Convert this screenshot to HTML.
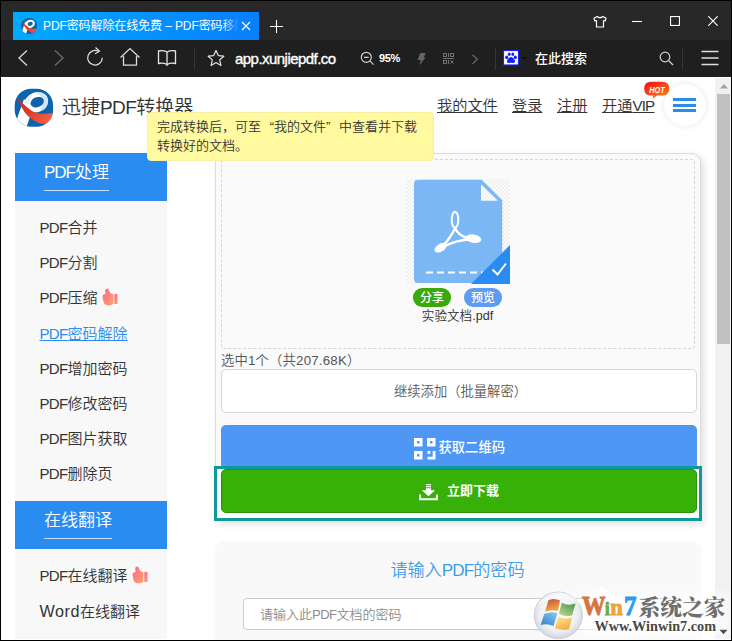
<!DOCTYPE html>
<html lang="zh-CN">
<head>
<meta charset="utf-8">
<title>PDF密码解除在线免费 – PDF密码移除</title>
<style>
*{box-sizing:border-box;margin:0;padding:0}
html,body{width:732px;height:641px;overflow:hidden;background:#fff}
body{position:relative;font-family:"Liberation Sans","Noto Sans CJK SC",sans-serif;color:#333;-webkit-font-smoothing:antialiased}
.abs{position:absolute}
#win{position:absolute;left:0;top:0;width:732px;height:641px;overflow:hidden;background:#fff}
/* chrome */
#titlebar{position:absolute;left:0;top:0;width:732px;height:40px;background:#282828}
#tab{position:absolute;left:13px;top:12px;width:246px;height:28px;background:linear-gradient(90deg,#00aaff,#0a7efc);overflow:hidden}
#tabtitle{position:absolute;left:30px;top:1px;height:27px;line-height:27px;font-size:12px;color:#fff;white-space:nowrap;width:196px;overflow:hidden;letter-spacing:-0.1px}
#tabfade{position:absolute;left:210px;top:0;width:16px;height:28px;background:linear-gradient(90deg,rgba(11,129,252,0),#0b81fc)}
#toolbar{position:absolute;left:0;top:40px;width:732px;height:37px;background:#1f1f1f}
#url{position:absolute;left:235px;top:0;height:37px;line-height:38px;font-size:15px;letter-spacing:-0.54px;color:#fff;-webkit-text-stroke:0.35px #fff;white-space:nowrap}
#zoomtxt{position:absolute;left:379px;top:0;height:37px;line-height:37px;font-size:11px;letter-spacing:-0.4px;color:#fff;font-weight:bold}
#searchtxt{position:absolute;left:535px;top:0;height:37px;line-height:37px;font-size:13px;color:#fff;font-weight:500;white-space:nowrap}
/* page */
#page{position:absolute;left:1px;top:77px;width:714px;height:563px;background:#fff;overflow:hidden;font-weight:350}
#logotitle{position:absolute;left:61px;top:16.5px;font-size:19px;line-height:28px;color:#333;white-space:nowrap}
.nav{position:absolute;top:17px;font-size:15.2px;line-height:24px;color:#333;text-decoration:underline;white-space:nowrap}
#side{position:absolute;left:14px;top:76px;width:152px;height:486px;background:#f8f8f8}
.sh{position:absolute;left:0;width:152px;height:48px;background:#2a8cf0;color:#fff;font-size:17px}
.sh>span{position:absolute;left:29px;top:7px;line-height:26px;height:31px;white-space:nowrap;border-bottom:1px solid rgba(255,255,255,.75)}
.si{position:absolute;left:24.5px;font-size:15px;line-height:24px;color:#333;white-space:nowrap}
.si.act{color:#2a8cf0;text-decoration:underline}
#card{position:absolute;left:214px;top:76px;width:486px;height:368px;background:#fafafa;border:1px solid #dcdcdc;border-radius:9px 9px 2px 2px;box-shadow:3px 3px 7px rgba(0,0,0,.12)}
#drop{position:absolute;left:220px;top:82px;width:474px;height:190px;border:1px dashed #d4d4d4;border-radius:4px;background:#fafafa}
#tip{position:absolute;left:146px;top:35px;width:287px;height:49px;background:#fffa9f;border:1px solid #fbf0a0;border-radius:4px;font-size:13px;line-height:18.5px;color:#333;padding:5px 0 0 9px;white-space:nowrap}
.q{display:inline-block;width:13px}.ql{text-align:right}.qr{text-align:left}
.l{letter-spacing:-0.65px}
.pill{position:absolute;top:211px;width:38px;height:18.5px;border-radius:9.25px;color:#fff;font-size:12px;line-height:21px;text-align:center;font-weight:500}
#fname{position:absolute;left:356.5px;top:230px;width:200px;text-align:center;font-size:12.6px;line-height:18px;color:#333}
#sel{position:absolute;left:220px;top:274px;letter-spacing:0.2px;font-size:13.3px;line-height:20px;color:#555;white-space:nowrap}
#btnadd{position:absolute;left:220px;top:292px;width:476px;height:44px;background:#fff;border:1px solid #d6d6d6;border-radius:5px;text-align:center;font-size:13.3px;line-height:43px;color:#5a5a5a;padding-left:3px}
#btnqr{position:absolute;left:220px;top:348px;width:476px;height:46px;background:#4f97f5;border-radius:5px 5px 0 0;color:#fff;font-size:13.3px}
#teal{position:absolute;left:213px;top:389px;width:488px;height:55px;border:3px solid #0e9a9a;background:#fff}
#btndl{position:absolute;left:220px;top:392px;width:476px;height:44px;background:#37b007;border:1px solid #2c8f06;border-radius:5px;color:#fff;font-size:13.3px}
#card2{position:absolute;left:214px;top:465px;width:486px;height:200px;background:#f9f9f9;border-radius:9px;box-shadow:0 0 3px rgba(0,0,0,.04)}
#c2title{position:absolute;left:213px;top:481px;width:487px;text-align:center;font-size:17.1px;line-height:26px;color:#3d9de8}
#pwd{position:absolute;left:242px;top:521px;width:430px;height:32px;background:#fff;border:1px solid #ccc;border-radius:4px;font-size:13px;line-height:31px;color:#8c8c8c;padding-left:16px;white-space:nowrap}
/* scrollbar */
#sb{position:absolute;left:715px;top:78px;width:16px;height:561px;background:#f1f1f1}
#sbthumb{position:absolute;left:2px;top:16px;width:13px;height:250px;background:#c1c1c1}
#bord-l{position:absolute;left:0;top:0;width:1px;height:641px;background:#000}
#bord-r{position:absolute;left:731px;top:0;width:1px;height:641px;background:#000}
#bord-b{position:absolute;left:0;top:640px;width:732px;height:1px;background:#000}
#bord-t{position:absolute;left:0;top:0;width:732px;height:1px;background:#000}
</style>
</head>
<body>
<div id="win">

<div id="titlebar">
  <div id="tab">
    <svg class="abs" style="left:8px;top:6px" width="16" height="16" viewBox="6.7 6.7 38.4 38">
      <defs><clipPath id="lclip2"><rect x="6.700" y="6.700" width="38.400" height="38" rx="18" ry="18"/></clipPath>
      <linearGradient id="lgr2" x1="0" y1="0" x2="1" y2="0.6"><stop offset="0" stop-color="#d42a14"/><stop offset="1" stop-color="#f4502f"/></linearGradient></defs>
      <rect x="6.700" y="6.700" width="38.400" height="38" rx="18" ry="18" fill="#0b64ad"/>
      <g clip-path="url(#lclip2)">
        <path d="M17 15 L9 38 L19 45 L24.500 26Z" fill="#fff"/>
        <ellipse cx="28.300" cy="20.500" rx="11.800" ry="9.700" transform="rotate(-18 28.3 20.5)" fill="#fff"/>
        <ellipse cx="28.800" cy="20.400" rx="6.400" ry="4.700" transform="rotate(-18 28.8 20.4)" fill="#0b64ad"/>
        <path d="M8.500 14.500 Q18 26 27 30.500 Q35 34 45.500 30.800 L45 38 Q40 42.500 32 41.800 Q22 37 17 30 Q11 21 8.500 14.500Z" fill="url(#lgr2)"/>
      </g>
    </svg>
    <div id="tabtitle">PDF密码解除在线免费 – PDF密码移除</div>
    <div id="tabfade"></div>
    <svg class="abs" style="left:228px;top:9px" width="10" height="10" viewBox="0 0 10 10"><path d="M1 1 L9 9 M9 1 L1 9" stroke="#fff" stroke-width="1.2" fill="none"/></svg>
  </div>
  <svg class="abs" style="left:270px;top:20px" width="13" height="13" viewBox="0 0 13 13"><path d="M6.5 0 V13 M0 6.5 H13" stroke="#fff" stroke-width="1.1" fill="none"/></svg>
  <!-- window controls -->
  <svg class="abs" style="left:592px;top:13.5px" width="16" height="16" viewBox="0 0 16 16"><path d="M5.2 2.5 L2 4.2 L2.8 7 L4.5 6.5 V13 H11.5 V6.5 L13.2 7 L14 4.2 L10.8 2.5 Q8 5 5.2 2.5Z" stroke="#fff" stroke-width="1.2" fill="none" stroke-linejoin="round"/></svg>
  <svg class="abs" style="left:632px;top:14px" width="10" height="14" viewBox="0 0 10 14"><path d="M0 7.500 H10" stroke="#fff" stroke-width="1.1"/></svg>
  <svg class="abs" style="left:670px;top:16px" width="10" height="10" viewBox="0 0 10 10"><rect x="0.55" y="0.55" width="8.9" height="8.9" stroke="#fff" stroke-width="1.1" fill="none"/></svg>
  <svg class="abs" style="left:708px;top:16px" width="10" height="10" viewBox="0 0 10 10"><path d="M0.300 0.300 L9.700 9.700 M9.700 0.300 L0.300 9.700" stroke="#fff" stroke-width="1.15" fill="none"/></svg>
</div>

<div id="toolbar">
  <!-- back -->
  <svg class="abs" style="left:16px;top:9px" width="14" height="18" viewBox="0 0 14 18"><path d="M11 1.5 L3 9 L11 16.5" stroke="#dedede" stroke-width="1.25" fill="none"/></svg>
  <!-- forward -->
  <svg class="abs" style="left:52px;top:9px" width="14" height="18" viewBox="0 0 14 18"><path d="M3 1.5 L11 9 L3 16.5" stroke="#6a6a6a" stroke-width="1.4" fill="none"/></svg>
  <!-- reload -->
  <svg class="abs" style="left:85px;top:6px" width="20" height="22" viewBox="0 0 20 22"><path d="M13.2 5.2 A7.3 7.3 0 1 0 17.3 11.8" stroke="#dedede" stroke-width="1.25" fill="none"/><path d="M10.5 1.5 L14.5 5.2 L10 7.8" stroke="#dedede" stroke-width="1.25" fill="none"/></svg>
  <!-- home -->
  <svg class="abs" style="left:119px;top:7px" width="22" height="20" viewBox="0 0 22 20"><path d="M1.5 10.5 L11 1.5 L20.5 10.5 M4.5 9 V18 H17.5 V9" stroke="#dedede" stroke-width="1.25" fill="none"/></svg>
  <!-- book -->
  <svg class="abs" style="left:156.5px;top:8.5px" width="20" height="18" viewBox="0 0 20 18"><path d="M10 3 Q6 1 1.5 2 V14.5 Q6 13.5 10 15.5 Q14 13.5 18.5 14.5 V2 Q14 1 10 3 V17" stroke="#e6e6e6" stroke-width="1.3" fill="none"/></svg>
  <div class="abs" style="left:194px;top:8px;width:1px;height:22px;background:#353535"></div>
  <!-- star -->
  <svg class="abs" style="left:207px;top:8.5px" width="18" height="18" viewBox="0 0 18 18"><path d="M9 1.5 L11.3 6.6 L16.8 7.2 L12.7 10.9 L13.9 16.4 L9 13.6 L4.1 16.4 L5.3 10.9 L1.2 7.2 L6.7 6.6Z" stroke="#e6e6e6" stroke-width="1.2" fill="none" stroke-linejoin="round"/></svg>
  <div id="url">app.xunjiepdf.co</div>
  <!-- zoom out magnifier -->
  <svg class="abs" style="left:359.500px;top:11px" width="16" height="16" viewBox="0 0 16 16"><circle cx="6.300" cy="6.300" r="5" stroke="#d4d4d4" stroke-width="1.150" fill="none"/><path d="M4 6.300 H8.600 M9.900 9.900 L13.600 13.600" stroke="#d4d4d4" stroke-width="1.150"/></svg>
  <div id="zoomtxt">95%</div>
  <!-- bolt -->
  <svg class="abs" style="left:417px;top:12px" width="10" height="14" viewBox="0 0 10 14"><path d="M3.400 1 H8.800 L6.600 5.600 H8.600 L2.400 13.300 L3.800 7.900 H0.600Z" fill="#666"/></svg>
  <!-- qr -->
  <svg class="abs" style="left:443px;top:13px" width="11" height="11" viewBox="0 0 11 11"><g stroke="#707070" stroke-width="1" fill="none"><rect x="0.500" y="0.500" width="3" height="3"/><rect x="7.500" y="0.500" width="3" height="3"/><rect x="0.500" y="7.500" width="3" height="3"/><path d="M5.500 0 V4 M0 5.500 H11 M5.500 7 V11 M7.500 7.500 L10.500 10.500 M10.500 7.500 L7.500 10.500"/></g></svg>
  <svg class="abs" style="left:471px;top:13.500px" width="8" height="11" viewBox="0 0 8 11"><path d="M1.500 0.700 L6.300 5.300 L1.500 9.900" stroke="#6a6a6a" stroke-width="1.200" fill="none"/></svg>
  <div class="abs" style="left:495px;top:8px;width:1px;height:22px;background:#353535"></div>
  <!-- baidu -->
  <svg class="abs" style="left:503px;top:10px" width="16" height="16" viewBox="0 0 16 16"><rect width="16" height="15.500" fill="#1b25f0"/><rect x="1.100" y="1.100" width="13.800" height="13.300" fill="#fff"/><g fill="#1420ff"><ellipse cx="3.700" cy="7.300" rx="1.500" ry="1.900"/><ellipse cx="6.200" cy="4.300" rx="1.400" ry="1.800"/><ellipse cx="9.800" cy="4.300" rx="1.400" ry="1.800"/><ellipse cx="12.300" cy="7.300" rx="1.500" ry="1.900"/><path d="M8 7 Q10 7 11.700 10 Q12.700 12.900 10.200 13 Q8 12.500 5.800 13 Q3.300 12.900 4.300 10 Q6 7 8 7Z"/></g></svg>
  <svg class="abs" style="left:522px;top:17px" width="5" height="3" viewBox="0 0 5 3"><path d="M0 0 H5 L2.500 3Z" fill="#0a0a0a"/></svg>
  <div id="searchtxt">在此搜索</div>
  <svg class="abs" style="left:659px;top:11px" width="15" height="15" viewBox="0 0 15 15"><circle cx="6" cy="6" r="4.8" stroke="#d0d0d0" stroke-width="1.2" fill="none"/><path d="M9.5 9.5 L14 14" stroke="#d0d0d0" stroke-width="1.2"/></svg>
  <div class="abs" style="left:682px;top:8px;width:1px;height:22px;background:#353535"></div>
  <svg class="abs" style="left:701px;top:10px" width="18" height="16" viewBox="0 0 18 16"><path d="M0.5 1.5 H17.5 M0.5 8 H17.5 M0.5 14.5 H17.5" stroke="#e0e0e0" stroke-width="1.3"/></svg>
</div>

<div id="page">
  <!-- logo -->
  <svg class="abs" style="left:7px;top:5px" width="54" height="54" viewBox="0 0 54 54">
    <defs>
      <linearGradient id="lgr" x1="0" y1="0" x2="1" y2="0.6"><stop offset="0" stop-color="#c4281a"/><stop offset="0.5" stop-color="#de3c25"/><stop offset="1" stop-color="#f4603f"/></linearGradient>
      <clipPath id="lclip"><rect x="6.700" y="6.700" width="38.400" height="38" rx="16.500" ry="16.500"/></clipPath>
    </defs>
    <rect x="6.700" y="6.700" width="38.400" height="38" rx="16.500" ry="16.500" fill="#0b64ad"/>
    <g clip-path="url(#lclip)">
      <path d="M16 17 L8.500 38 L18.500 45 L25 26Z" fill="#fff"/>
      <ellipse cx="28.300" cy="20.300" rx="12" ry="9.900" transform="rotate(-20 28.3 20.3)" fill="#fff"/>
      <path d="M26 10.600 Q38.500 8.500 40.200 18.500 Q40 27.500 30.500 30.200 Q35.500 24 34.800 18 Q33 12 26 10.600Z" fill="#d2e8f9"/>
      <path d="M16.500 21 Q19 13.500 26 11.500 Q21.500 15.500 21 22.500Z" fill="#e4f1fb"/>
      <ellipse cx="29.200" cy="20.200" rx="6.900" ry="5" transform="rotate(-22 29.2 20.2)" fill="#0b64ad"/>
      <path d="M8.500 14.500 Q16 23.500 24 29 Q32 33.500 45.500 30.800 L45 38 Q40 42.500 32 41.500 Q22 37.500 16.500 30 Q11 21 8.500 14.500Z" fill="url(#lgr)"/>
    </g>
  </svg>
  <div id="logotitle">迅捷<span style="letter-spacing:-0.6px">PDF</span>转换器</div>
  <div class="nav" style="left:436px">我的文件</div>
  <div class="nav" style="left:511px">登录</div>
  <div class="nav" style="left:556px">注册</div>
  <div class="nav" style="left:601px">开通<span style="letter-spacing:-0.8px">VIP</span></div>
  <!-- HOT -->
  <svg class="abs" style="left:642px;top:4px" width="28" height="19" viewBox="0 0 28 19">
    <defs><linearGradient id="hg" x1="0.1" y1="0" x2="0.9" y2="1"><stop offset="0" stop-color="#f60f1c"/><stop offset="0.5" stop-color="#fa4a1a"/><stop offset="1" stop-color="#ff9412"/></linearGradient></defs>
    <path d="M8 0.800 H19.500 Q26.200 0.800 26.200 7.700 Q26.200 14.600 19.500 14.600 H14 L9.800 17.800 L10.300 14.600 H8 Q1.200 14.600 1.200 7.700 Q1.200 0.800 8 0.800Z" fill="url(#hg)"/>
    <text x="6.200" y="11.600" font-family="Liberation Sans, sans-serif" font-size="9.800" font-weight="bold" font-style="italic" fill="#fff" textLength="15.500" lengthAdjust="spacingAndGlyphs">HOT</text>
  </svg>
  <!-- hamburger circle -->
  <div class="abs" style="left:663px;top:7px;width:42px;height:42px;border-radius:50%;background:#fff;box-shadow:0 0 6px rgba(0,0,0,.10)"></div>
  <div class="abs" style="left:672px;top:21px;width:23px;height:3px;background:#2a8cf0"></div>
  <div class="abs" style="left:672px;top:26.5px;width:23px;height:3px;background:#2a8cf0"></div>
  <div class="abs" style="left:672px;top:32px;width:23px;height:3px;background:#2a8cf0"></div>

  <!-- sidebar -->
  <div id="side">
    <div class="sh" style="top:0"><span><span style="letter-spacing:-1px">PDF</span>处理</span></div>
    <div class="si" style="top:63px"><span class="l">PDF</span>合并</div>
    <div class="si" style="top:98px"><span class="l">PDF</span>分割</div>
    <div class="si" style="top:133px"><span class="l">PDF</span>压缩</div>
    <svg class="abs" style="left:86.5px;top:134.5px" width="16" height="18" viewBox="0 0 16 18"><defs><linearGradient id="tg1" x1="0" y1="0" x2="1" y2="1"><stop offset="0" stop-color="#ff6397"/><stop offset="1" stop-color="#ffa562"/></linearGradient></defs><path d="M4.500 0.700 Q6.300 0 6.800 2 Q7.200 4.500 9 5.500 L11.300 6.300 V16 Q8 18 4.500 17 Q2 16.500 1.300 13 L0.500 8.500 Q0.300 6.500 2.500 6.300 L3.600 6 Q3 3 3.200 2 Q3.400 0.900 4.500 0.700Z" fill="url(#tg1)"/><rect x="12.300" y="6" width="3.300" height="10" rx="0.800" fill="url(#tg1)"/></svg>
    <div class="si act" style="top:169px"><span class="l">PDF</span>密码解除</div>
    <div class="si" style="top:204px"><span class="l">PDF</span>增加密码</div>
    <div class="si" style="top:239px"><span class="l">PDF</span>修改密码</div>
    <div class="si" style="top:274px"><span class="l">PDF</span>图片获取</div>
    <div class="si" style="top:309px"><span class="l">PDF</span>删除页</div>
    <div class="sh" style="top:348px"><span>在线翻译</span></div>
    <div class="si" style="top:411px"><span class="l">PDF</span>在线翻译</div>
    <svg class="abs" style="left:116.7px;top:412.7px" width="16" height="18" viewBox="0 0 16 18"><defs><linearGradient id="tg2" x1="0" y1="0" x2="1" y2="1"><stop offset="0" stop-color="#ff6397"/><stop offset="1" stop-color="#ffa562"/></linearGradient></defs><path d="M4.500 0.700 Q6.300 0 6.800 2 Q7.200 4.500 9 5.500 L11.300 6.300 V16 Q8 18 4.500 17 Q2 16.500 1.300 13 L0.500 8.500 Q0.300 6.500 2.500 6.300 L3.600 6 Q3 3 3.200 2 Q3.400 0.900 4.500 0.700Z" fill="url(#tg2)"/><rect x="12.300" y="6" width="3.300" height="10" rx="0.800" fill="url(#tg2)"/></svg>
    <div class="si" style="top:446px"><span style="font-size:16.2px;letter-spacing:0.5px">Word</span>在线翻译</div>
  </div>

  <!-- main card -->
  <div id="card"></div>
  <div id="drop"></div>
  <!-- file icon -->
  <svg class="abs" style="left:405px;top:102px" width="104" height="105" viewBox="0 0 104 105">
    <defs>
      <pattern id="chk" width="4" height="4" patternUnits="userSpaceOnUse"><rect width="4" height="4" fill="#fafafa"/><rect width="2" height="2" fill="#f1f1f1"/><rect x="2" y="2" width="2" height="2" fill="#f1f1f1"/></pattern>
    </defs>
    <rect x="0" y="0" width="104" height="105" fill="url(#chk)"/>
    <path d="M12 0.700 H75.700 L96.200 21.200 V100 Q96.200 104 92.200 104 H12 Q8 104 8 100 V4.700 Q8 0.700 12 0.700Z" fill="#73b3f5" fill-opacity="0.93"/>
    <path d="M75 5.300 V21.800 H92Z" fill="url(#chk)"/>
    <path d="M20 93.500 H78" stroke="#fff" stroke-width="2" stroke-dasharray="7 4" fill="none"/>
    <g fill="none" stroke="#fff" stroke-linecap="round" stroke-linejoin="round">
      <ellipse cx="49" cy="40.700" rx="3.300" ry="8" stroke-width="2"/>
      <path d="M48.800 49.500 Q45 58 37 67" stroke-width="2.400"/>
      <path d="M49.300 49.500 Q52 56 62 59.500" stroke-width="2.400"/>
      <path d="M63 60.300 Q50 61.500 38 67.500" stroke-width="2.400"/>
    </g>
    <ellipse cx="34.600" cy="68.700" rx="6.800" ry="3.900" transform="rotate(-32 34.600 68.700)" fill="#fff"/>
    <ellipse cx="67.400" cy="59.700" rx="8" ry="4.200" transform="rotate(9 67.400 59.700)" fill="#fff"/>
    <path d="M104 66 V105 H65Z" fill="#2a8cf0"/>
    <path d="M86.500 90.500 L91.500 95.500 L100 84.500" stroke="#fff" stroke-width="2" fill="none"/>
  </svg>
  <div class="pill" style="left:412px;background:#3aa90a">分享</div>
  <div class="pill" style="left:463px;background:#5b9df5">预览</div>
  <div id="fname">实验文档.pdf</div>

  <div id="sel">选中1个（共207.68K）</div>
  <div id="btnadd">继续添加（批量解密）</div>
  <div id="btnqr">
    <svg class="abs" style="left:193px;top:12.500px" width="22" height="22" viewBox="0 0 22 22"><g fill="#fff">
      <path d="M0 0 H8.500 V8.500 H0Z M3 3 V5.500 H5.500 V3Z" fill-rule="evenodd"/>
      <path d="M13 0 H21.500 V8.500 H13Z M16 3 V5.500 H18.500 V3Z" fill-rule="evenodd"/>
      <path d="M0 13 H8.500 V21.500 H0Z M3 16 V18.500 H5.500 V16Z" fill-rule="evenodd"/>
      <rect x="13.500" y="13" width="2.800" height="2.800"/>
      <path d="M18.700 13 H21.500 V21.500 H13.500 V18.700 H18.700Z"/>
    </g></svg>
    <span class="abs" style="left:217.5px;top:1px;line-height:43px;white-space:nowrap;font-weight:500">获取二维码</span>
  </div>
  <div id="teal"></div>
  <div id="btndl">
    <svg class="abs" style="left:197px;top:14px" width="19" height="16.600" viewBox="0 0 20 17.500" preserveAspectRatio="none"><g fill="#fff">
      <rect x="7.300" y="0" width="5.400" height="1.300"/><rect x="7.300" y="2.200" width="5.400" height="1.300"/>
      <path d="M7.300 4.400 H12.700 V6.500 H17 L10 13 L3 6.500 H7.300Z"/>
      <path d="M0 11 H2.200 V15 H17.800 V11 H20 V17.200 H0Z"/>
    </g></svg>
    <span class="abs" style="left:225px;top:0;line-height:42px;white-space:nowrap;font-weight:bold;font-size:13px">立即下载</span>
  </div>
  <div id="card2"></div>
  <div id="c2title">请输入<span style="letter-spacing:-0.9px">PDF</span>的密码</div>
  <div id="pwd">请输入此<span style="letter-spacing:-0.5px">PDF</span>文档的密码</div>

  <div id="tip">完成转换后，可至<span class="q ql">“</span>我的文件<span class="q qr">”</span>中查看并下载<br>转换好的文档。</div>
</div>

<div id="sb">
  <svg class="abs" style="left:4.500px;top:5.500px" width="8" height="5" viewBox="0 0 8 5"><path d="M0 4.500 L4 0 L8 4.500Z" fill="#a3a3a3"/></svg>
  <div id="sbthumb"></div>
  
</div>


<!-- watermark -->
<svg class="abs" style="left:526px;top:576px" width="206" height="65" viewBox="526 576 206 65">
  <defs>
    <radialGradient id="orb" cx="0.5" cy="0.45" r="0.55"><stop offset="0" stop-color="#ffffff" stop-opacity="0.92"/><stop offset="0.7" stop-color="#eceff3" stop-opacity="0.9"/><stop offset="1" stop-color="#cdd3dc" stop-opacity="0.93"/></radialGradient>
    <linearGradient id="fr" x1="0.3" y1="0" x2="0.6" y2="1"><stop offset="0" stop-color="#c9553a"/><stop offset="1" stop-color="#f7b247"/></linearGradient>
    <linearGradient id="fg" x1="0.9" y1="0" x2="0.2" y2="1"><stop offset="0" stop-color="#4a9446"/><stop offset="1" stop-color="#b4d88a"/></linearGradient>
    <linearGradient id="fb" x1="0.9" y1="0" x2="0.1" y2="1"><stop offset="0" stop-color="#86c8f0"/><stop offset="1" stop-color="#3480cf"/></linearGradient>
    <linearGradient id="fy" x1="0.2" y1="0" x2="0.7" y2="1"><stop offset="0" stop-color="#fde592"/><stop offset="1" stop-color="#f5a93c"/></linearGradient>
    <filter id="wblur" x="-20%" y="-20%" width="140%" height="140%"><feGaussianBlur stdDeviation="3"/></filter>
  </defs>
  <rect x="580" y="592" width="150" height="46" fill="#fff" opacity="0.55" filter="url(#wblur)"/>
  <path d="M586 604 L601 586.500 L616 597 L640 597 L640 604Z" fill="#fff" opacity="0.8"/>
  <ellipse cx="558.300" cy="615.300" rx="24.100" ry="23.300" fill="url(#orb)" stroke="#c6ccd5" stroke-width="0.900"/>
  <path d="M534.500 598.500 H544 M534.500 630 H541" stroke="#cfcfcf" stroke-width="1" opacity="0.6"/>
  <path d="M548.500 600 Q554 597.600 560 600.600 L557.900 611.300 Q552 608.800 545 611.800Z" fill="url(#fr)"/>
  <path d="M561.800 602.700 Q568 606.300 575.500 603.600 L572.100 615.200 Q565 617.600 558.800 613.500Z" fill="url(#fg)"/>
  <path d="M544.200 613.900 Q551 611 557.500 613 L553.600 625.900 Q547 623 540.700 625.100Z" fill="url(#fb)"/>
  <path d="M558.300 616.500 Q565 620 572.100 617.300 L569.100 628.900 Q562 631 554.900 628.100Z" fill="url(#fy)"/>
  <path d="M537 606 Q545 592.500 560 592.300 Q574 593 580 604 Q568 596.500 553 599 Q543 601 537 606Z" fill="#fff" opacity="0.5"/>
  <g font-family="Liberation Serif, serif" font-weight="bold" stroke-width="1">
    <text x="582" y="614.600" font-size="28" textLength="23.500" lengthAdjust="spacingAndGlyphs" fill="#d8743f" stroke="#d8743f">W</text>
    <text x="605" y="614.600" font-size="18" textLength="4.600" lengthAdjust="spacingAndGlyphs" fill="#6aa84f" stroke="#6aa84f">i</text>
    <text x="610.200" y="614.600" font-size="24" textLength="12.500" lengthAdjust="spacingAndGlyphs" fill="#efa33a" stroke="#efa33a">n</text>
    <text x="624" y="614.600" font-size="28" textLength="12.500" lengthAdjust="spacingAndGlyphs" fill="#2b9af3" stroke="#2b9af3">7</text>
  </g>
  <text x="638.500" y="614.500" font-family="Noto Serif CJK SC, serif" font-weight="900" font-size="22" fill="#6e6e6e" textLength="87" lengthAdjust="spacingAndGlyphs">系统之家</text>
  <text x="594.500" y="631.300" font-family="Liberation Serif, serif" font-weight="bold" font-size="15.200" fill="#484848" stroke="#fff" stroke-width="1.800" paint-order="stroke" textLength="121.500" lengthAdjust="spacingAndGlyphs">Www.Winwin7.com</text>
  <path d="M719.500 629.800 H727.500 L723.500 634.300Z" fill="#505050"/>
</svg>
<div id="bord-t"></div><div id="bord-l"></div><div id="bord-r"></div><div id="bord-b"></div>
</div>
</body>
</html>
